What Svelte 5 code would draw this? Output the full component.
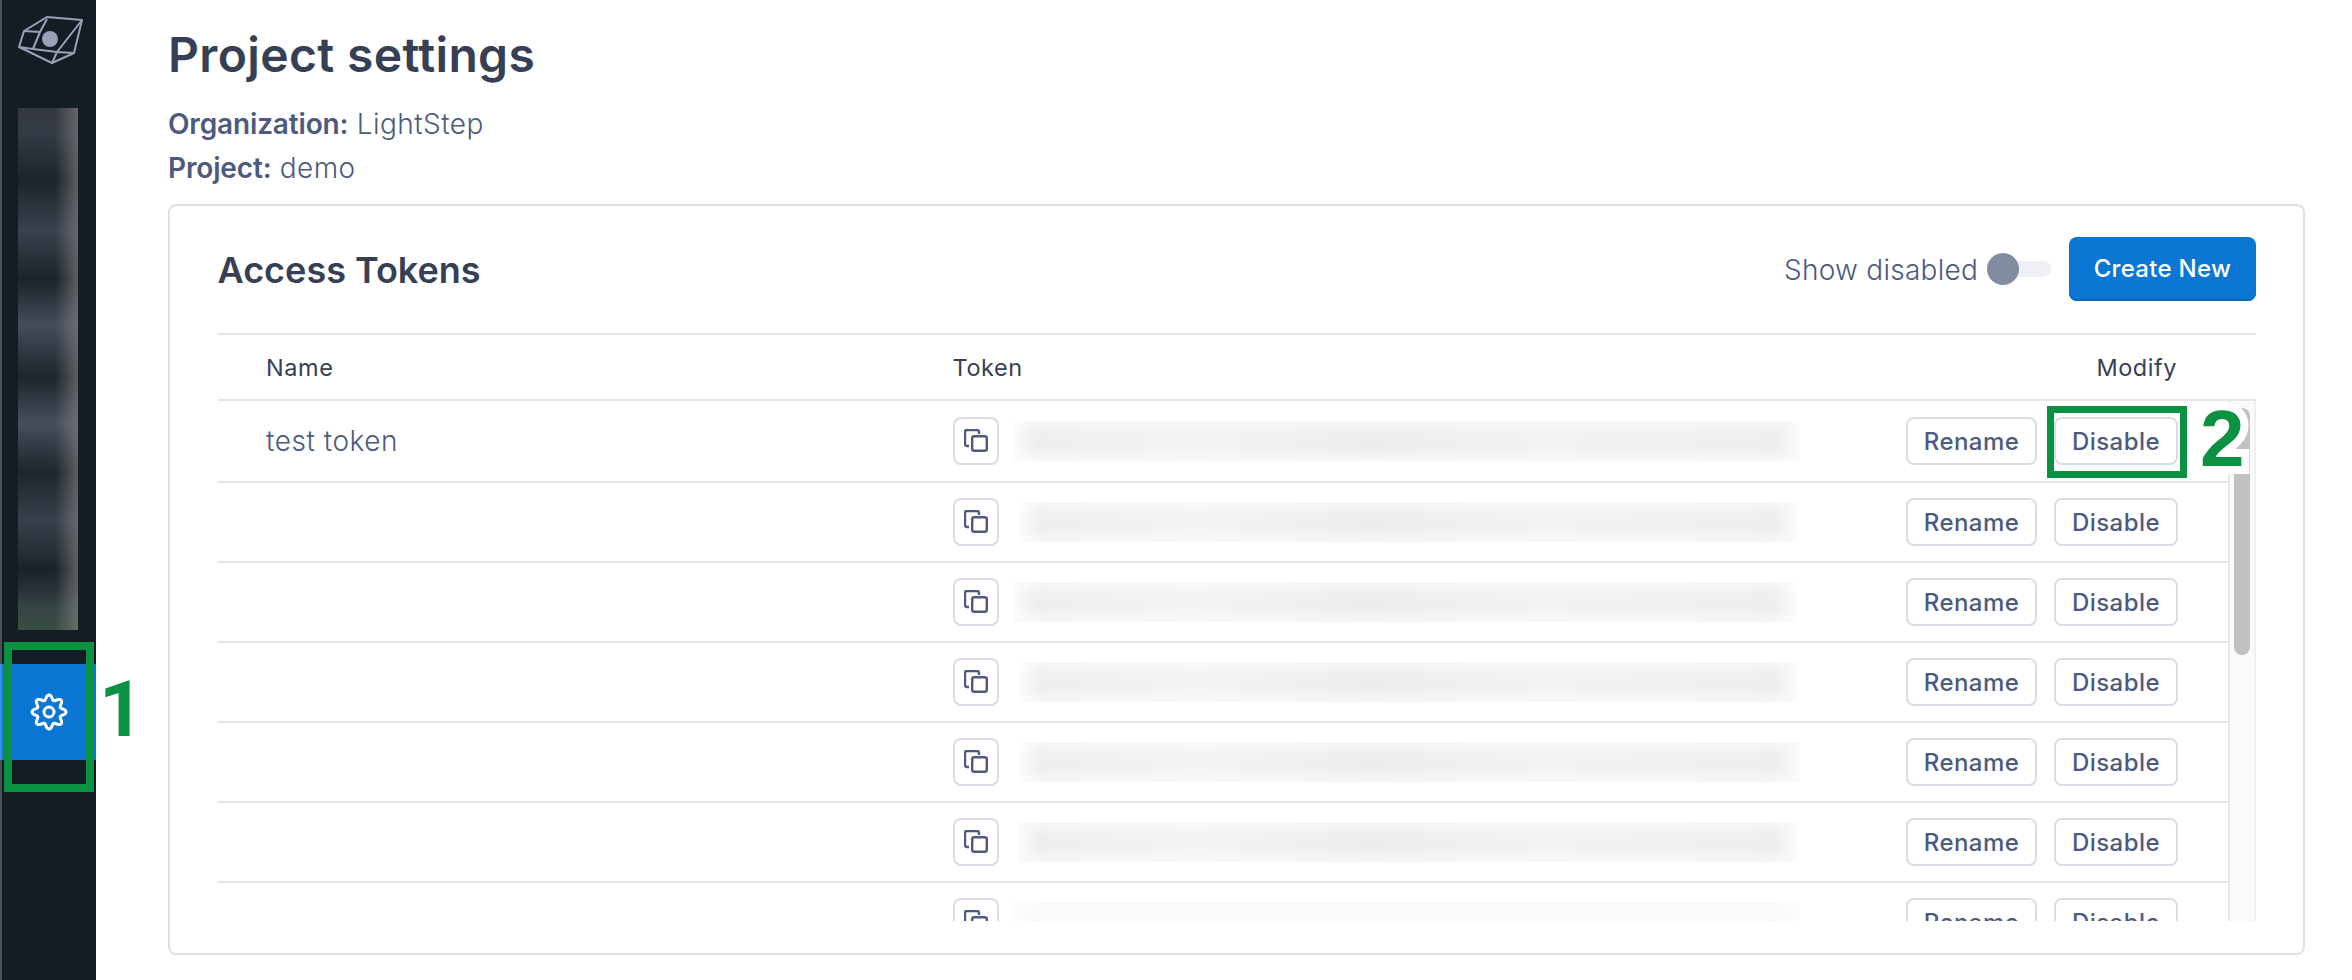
<script>

	// Blurred token smudges (left and right edge in page pixels)
	const smudges = [
		[1014, 1800], [1020, 1797], [1014, 1796], [1020, 1797], [1020, 1800], [1018, 1797], [1013, 1800]
	];
	const rows = smudges.map((s, i) => ({ name: i === 0 ? 'test token' : '', offset: s[0] - 999, width: s[1] - s[0], faint: i === 6 }));

	// Gear outline: eight rounded lobes around the centre of a 40 box
	let gear = '';
	for(let i = 0; i < 240; i++) {
		const a = (i / 240) * Math.PI * 2;
		const r = 14.6 + 2.4 * Math.cos(8 * a);
		gear += (i === 0 ? 'M' : 'L') + (20 + r * Math.sin(a)).toFixed(2) + ' ' + (20 - r * Math.cos(a)).toFixed(2);
	}
	gear += 'Z';

</script>

<div class="page">

	<!-- Sidebar -->
	<nav class="sidebar">
		<svg class="logo" width="76" height="60" viewBox="12 10 76 60" fill="none" stroke="#98a1b6" stroke-width="2" stroke-linejoin="round">
			<path d="M47 17 82 20 74 53 52 63 19 47 24 31Z" />
			<path d="M24 31 40 32 47 19M40 32 33 49 19 47M33 49 57 52 52 63M57 52 74 53M57 52 82 20" />
			<circle cx="50" cy="39" r="8" fill="#98a1b6" stroke="none" />
		</svg>
		<div class="nav-blur"></div>
		<div class="settings-tile">
			<svg width="40" height="40" viewBox="0 0 40 40" fill="none" stroke="#fff" stroke-width="3">
				<path d={gear} />
				<circle cx="20" cy="20" r="5" />
			</svg>
		</div>
	</nav>

	<!-- Main content -->
	<main class="content">
		<h1>Project settings</h1>
		<p class="meta meta-first"><b>Organization:</b> LightStep</p>
		<p class="meta"><b>Project:</b> demo</p>

		<section class="card">
			<header class="card-head">
				<h2>Access Tokens</h2>
				<div class="card-tools">
					<span class="show-label">Show disabled</span>
					<span class="toggle"><span class="knob"></span></span>
					<button class="primary">Create New</button>
				</div>
			</header>

			<div class="table-head">
				<span class="col-name">Name</span>
				<span>Token</span>
				<span>Modify</span>
			</div>

			<div class="table-body">
				<div class="rows">
					{#each rows as row}
						<div class="row">
							<span class="col-name row-name">{row.name}</span>
							<div class="token">
								<button class="copy" aria-label="Copy token">
									<svg width="24" height="24" viewBox="0 0 24 24" fill="none" stroke="#4d5a7e" stroke-width="2.4">
										<rect x="8.2" y="7.2" width="14.6" height="14.6" rx="2" />
										<path d="M5 17H3a2 2 0 0 1-2-2V3a2 2 0 0 1 2-2h10a2 2 0 0 1 2 2v2" />
									</svg>
								</button>
								<div class="smudge" class:faint={row.faint} style="margin-left:{row.offset}px;width:{row.width}px"></div>
							</div>
							<div class="actions">
								<button class="ghost rename">Rename</button>
								<button class="ghost disable">Disable</button>
							</div>
						</div>
					{/each}
				</div>
				<div class="track"><div class="thumb"></div></div>
			</div>
		</section>
	</main>

	<!-- Annotations drawn over the screenshot -->
	<div class="mark mark-gear"></div>
	<span class="digit digit-one">1</span>
	<div class="mark mark-disable"></div>
	<span class="digit digit-two">2</span>
</div>

<style>

	:global(body) {
		margin: 0;
		background: #fff;
	}

	.page {
		position: relative;
		display: flex;
		width: 2352px;
		height: 980px;
		overflow: hidden;
		font-family: Inter, "Liberation Sans", sans-serif;
		color: #4d5a7e;
	}

	.sidebar {
		display: flex;
		flex-direction: column;
		align-items: center;
		flex: none;
		box-sizing: border-box;
		width: 96px;
		border-left: 2px solid #4a5155;
		background: #141d24;
	}

	.logo {
		align-self: flex-start;
		margin: 10px 0 0 10px;
		flex: none;
	}

	.nav-blur {
		flex: none;
		width: 60px;
		height: 522px;
		margin-top: 38px;
		margin-right: 2px;
		background:
			linear-gradient(to right, rgba(150, 150, 150, 0) 62%, rgba(130, 130, 130, .62) 100%),
			linear-gradient(to bottom, rgba(60, 90, 70, 0) 92%, rgba(60, 90, 70, .5) 100%),
			linear-gradient(to bottom, #33383f 0, #363c46 23px, #1c2329 72px, #3b414d 122px, #1c2329 171px, #464c5a 217px, #1e252b 269px, #484e5c 315px, #1e252b 364px, #3a404b 413px, #1b2228 462px, #363e45 500px, #36433f 522px);
	}

	.settings-tile {
		display: flex;
		align-items: center;
		justify-content: center;
		flex: none;
		box-sizing: border-box;
		width: 96px;
		height: 96px;
		margin: 34px 0 0 -2px;
		border-left: 2px solid #3f8fe0;
		background: #0b76d4;
	}

	.content {
		flex: 1;
		min-width: 0;
		padding: 0 47px 25px 72px;
		display: flex;
		flex-direction: column;
	}

	h1 {
		margin: 26px 0 0;
		font-size: 48px;
		line-height: 58px;
		font-weight: 600;
		color: #363f54;
		letter-spacing: .35px;
	}

	.meta {
		margin: 0;
		font-size: 28px;
		line-height: 44px;
		font-weight: 300;
		letter-spacing: .45px;
	}

	.meta b {
		font-weight: 600;
		letter-spacing: -.15px;
	}

	.meta-first {
		margin-top: 18px;
	}

	.card {
		flex: 1;
		min-height: 0;
		margin-top: 14px;
		box-sizing: border-box;
		border: 2.5px solid #dde1e6;
		border-radius: 8px;
		padding: 0 47px 0 47.5px;
		display: flex;
		flex-direction: column;
	}

	.card-head {
		display: flex;
		align-items: center;
		justify-content: space-between;
		flex: none;
		height: 129px;
		padding-bottom: 2px;
		box-sizing: border-box;
		border-bottom: 2px solid #e3e5ea;
	}

	h2 {
		margin: 2px 0 0;
		font-size: 36px;
		font-weight: 600;
		color: #363f54;
	}

	.card-tools {
		display: flex;
		align-items: center;
	}

	.show-label {
		margin-top: 2px;
		font-size: 28px;
		font-weight: 300;
		letter-spacing: .25px;
	}

	.toggle {
		display: flex;
		align-items: center;
		width: 64px;
		height: 16px;
		margin: 0 18px 0 9px;
		border-radius: 8px;
		background: linear-gradient(to right, transparent 8px, #eef0f4 8px);
	}

	.knob {
		width: 32px;
		height: 32px;
		border-radius: 50%;
		background: #828ca0;
	}

	button {
		font-family: inherit;
		cursor: pointer;
	}

	.primary {
		width: 187px;
		height: 64px;
		border: none;
		box-shadow: inset 0 -2px 0 #0a69bd;
		border-radius: 8px;
		background: #0b76d4;
		color: #fff;
		font-size: 24px;
		font-weight: 500;
		letter-spacing: .3px;
	}

	.table-head {
		display: grid;
		grid-template-columns: 735px 1fr auto;
		align-items: center;
		flex: none;
		height: 64px;
		padding-right: 79px;
		font-size: 23.5px;
		letter-spacing: .55px;
		color: #363f54;
	}

	.col-name {
		padding-left: 48.5px;
	}

	.table-body {
		display: flex;
		flex: none;
		height: 522px;
		overflow: hidden;
		border-top: 2px solid #e3e5ea;
		box-sizing: border-box;
	}

	.rows {
		flex: 1;
		min-width: 0;
	}

	.track {
		flex: none;
		box-sizing: border-box;
		width: 28px;
		padding: 7px 4px 0;
		background: #fafafa;
		border-left: 2px solid #e8e8e8;
		border-right: 2px solid #efefef;
	}

	.thumb {
		height: 247px;
		border-radius: 9px;
		background: #c1c1c1;
	}

	.row {
		display: grid;
		grid-template-columns: 735px 1fr auto;
		align-items: center;
		box-sizing: border-box;
		height: 80px;
		padding-right: 50px;
		border-bottom: 2px solid #e3e5ea;
	}

	.row:first-child {
		height: 82px;
	}

	.row-name {
		font-size: 28px;
		font-weight: 300;
		letter-spacing: .55px;
	}

	.token {
		display: flex;
		align-items: center;
		min-width: 0;
	}

	.copy {
		display: flex;
		align-items: center;
		justify-content: center;
		flex: none;
		width: 46px;
		height: 48px;
		padding: 0;
		border: 2.5px solid #d8dde5;
		border-radius: 8px;
		background: #fff;
	}

	.smudge {
		flex: none;
		position: relative;
		height: 40px;
		overflow: hidden;
		background: #fbfbfb;
	}

	.smudge::before {
		content: '';
		position: absolute;
		inset: 5px 12px;
		background: linear-gradient(to right, #ecedef, #f1f2f3 22%, #ebecee 45%, #f0f1f2 68%, #ecedef);
		filter: blur(7px);
	}

	.faint {
		background: #fcfcfc;
	}

	.faint::before {
		background: #f7f8f8;
	}

	.actions {
		display: flex;
		gap: 17px;
	}

	.ghost {
		height: 48px;
		padding: 0;
		border: 2.5px solid #d8dde5;
		border-radius: 8px;
		background: #fff;
		color: #4d5a7e;
		font-size: 24px;
		font-weight: 500;
		letter-spacing: .45px;
	}

	.rename {
		width: 131px;
	}

	.disable {
		width: 124px;
	}

	/* Annotations */
	.mark {
		position: absolute;
		box-sizing: border-box;
		border: 8px solid #0a9141;
	}

	.mark-gear {
		left: 4px;
		top: 642px;
		width: 90px;
		height: 150px;
	}

	.mark-disable {
		left: 2047px;
		top: 406px;
		width: 140px;
		height: 72px;
		border-width: 7px;
	}

	.digit {
		position: absolute;
		font-family: Roboto, "Liberation Sans", sans-serif;
		font-size: 78px;
		font-weight: 700;
		line-height: 80px;
		color: #0a9141;
	}

	.digit-one {
		left: 99px;
		top: 670px;
	}

	.digit-two {
		left: 2200px;
		top: 399px;
		font-family: "Liberation Sans", Arial, sans-serif;
		font-size: 80px;
		-webkit-text-stroke: 16px #fff;
		paint-order: stroke fill;
	}

</style>
